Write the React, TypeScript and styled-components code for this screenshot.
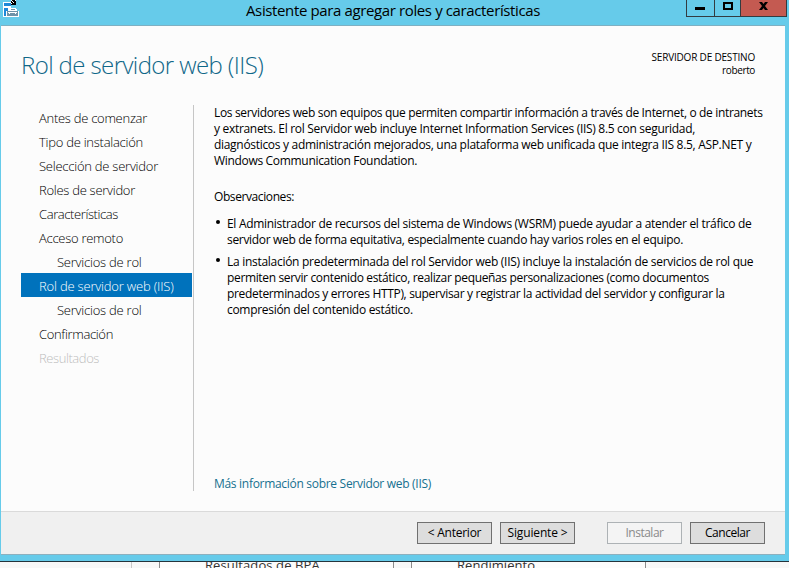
import React from "react";
import styled, { createGlobalStyle } from "styled-components";

const GlobalStyle = createGlobalStyle`
  * { box-sizing: border-box; }
  body {
    margin: 0;
    overflow: hidden;
    background: #f8f8f8;
    font-family: "Open Sans", "Noto Sans", sans-serif;
    font-size: 12px;
    color: #000;
  }
`;

const Screen = styled.div`
  width: 789px;
  height: 568px;
  display: flex;
  flex-direction: column;
  overflow: hidden;
`;

const Window = styled.div`
  height: 562px;
  flex: none;
  display: flex;
  flex-direction: column;
  background: #66cbea;
  border-bottom: 1px solid #25343c;
  padding: 0 4px 6px 1px;
`;

const TitleBar = styled.header`
  height: 25px;
  flex: none;
  display: grid;
  grid-template-columns: 100px 1fr 100px;
`;

const AppIcon = styled.svg`
  display: block;
  margin-left: 2px;
`;

const Title = styled.h1`
  margin: 0;
  text-align: center;
  font-size: 15px;
  font-weight: 400;
  line-height: 21px;
  letter-spacing: -0.375px;
  white-space: nowrap;
`;

const Controls = styled.div`
  display: flex;
  justify-content: flex-end;
  height: 17px;
  margin-right: -2px;
`;

const Control = styled.button<{ $width: number; $close?: boolean }>`
  width: ${(p) => p.$width}px;
  height: 17px;
  padding: 0;
  margin-left: -1px;
  border: 1px solid #333b40;
  border-top: 0;
  background: ${(p) => (p.$close ? "#c45a51" : "#66cbea")};
  svg { display: block; }
`;

const Client = styled.div`
  flex: 1;
  min-height: 0;
  display: flex;
  flex-direction: column;
  background: #fcfcfc;
  border-top: 1px solid #7fb0c2;
  border-bottom: 1px solid #8db0be;
`;

const Heading = styled.div`
  height: 79px;
  flex: none;
  display: flex;
  justify-content: space-between;
  padding: 23px 30px 0 20px;
`;

const PageTitle = styled.h2`
  margin: 0;
  font-size: 24px;
  font-weight: 300;
  line-height: 32px;
  letter-spacing: -0.6px;
  color: #0f6788;
`;

const Destination = styled.div`
  display: flex;
  flex-direction: column;
  align-items: flex-end;
  padding-top: 2px;
  font-size: 10px;
  line-height: 13px;
`;

const Fit = styled.span<{ $tracking: number }>`
  display: block;
  white-space: nowrap;
  letter-spacing: ${(p) => p.$tracking}px;
`;

const Main = styled.div`
  height: 386px;
  flex: none;
  display: flex;
`;

const Nav = styled.nav`
  width: 193px;
  flex: none;
  border-right: 1px solid #c6c6c6;
  padding: 0 1px 0 20px;
`;

const Step = styled.div<{ $nested?: boolean; $state?: "active" | "disabled" }>`
  height: 24px;
  line-height: 27px;
  padding-left: ${(p) => (p.$nested ? 36 : 18)}px;
  font-size: 13px;
  font-weight: 300;
  color: ${(p) => (p.$state === "active" ? "#fff" : p.$state === "disabled" ? "#bdbdbd" : "#000")};
  background: ${(p) => (p.$state === "active" ? "#0072bc" : "transparent")};
`;

const Content = styled.main`
  flex: 1;
  display: flex;
  flex-direction: column;
  padding-left: 20px;
  line-height: 16px;
`;

const Intro = styled.div`
  margin-bottom: 20px;
`;

const Notes = styled.ul`
  list-style: none;
  margin: 11px 0 0;
  padding: 0;
  display: flex;
  flex-direction: column;
  gap: 6px;
`;

const Note = styled.li`
  display: grid;
  grid-template-columns: 13px 1fr;
  &::before {
    content: "";
    width: 4px;
    height: 4px;
    margin: 4px 0 0 2px;
    border-radius: 2px;
    background: #000;
  }
`;

const MoreLink = styled.a`
  margin-top: auto;
  margin-bottom: -1px;
  color: #16708f;
`;

const Footer = styled.footer`
  flex: none;
  height: 43px;
  margin-top: auto;
  display: flex;
  justify-content: flex-end;
  gap: 8px;
  padding: 10px 20px 0 0;
  background: #f0f0f0;
  border-top: 1px solid #dadada;
`;

const Button = styled.button<{ $spaced?: boolean }>`
  width: 75px;
  height: 22px;
  padding: 0;
  margin-left: ${(p) => (p.$spaced ? 24 : 0)}px;
  display: flex;
  align-items: center;
  justify-content: center;
  border: 1px solid #707070;
  background: #dddddd;
  font: 12px/20px "Open Sans", "Noto Sans", sans-serif;
  color: #000;
  &:disabled {
    color: #8a8a8a;
    background: #f4f4f4;
    border-color: #adb2b5;
  }
`;

const Behind = styled.div`
  flex: 1;
  min-height: 0;
  display: grid;
  grid-template-columns: 132px 27px 235px 17px 235px 1fr;
  overflow: hidden;
`;

const Gutter = styled.div`
  border-right: 1px solid #c9c9c9;
`;

const Gap = styled.div``;

const Tile = styled.div`
  border: solid #8c8c8c;
  border-width: 0 1px;
  background: #fcfcfc;
  padding-left: 45px;
  font-size: 13px;
  line-height: 17px;
  color: #333;
  > span { margin-top: -5px; }
`;

const steps: { label: string; tracking: number; nested?: boolean; state?: "active" | "disabled" }[] = [
  { label: "Antes de comenzar", tracking: -0.277 },
  { label: "Tipo de instalación", tracking: -0.258 },
  { label: "Selección de servidor", tracking: -0.244 },
  { label: "Roles de servidor", tracking: -0.277 },
  { label: "Características", tracking: -0.402 },
  { label: "Acceso remoto", tracking: -0.28 },
  { label: "Servicios de rol", tracking: -0.234, nested: true },
  { label: "Rol de servidor web (IIS)", tracking: -0.19, state: "active" },
  { label: "Servicios de rol", tracking: -0.234, nested: true },
  { label: "Confirmación", tracking: -0.338 },
  { label: "Resultados", tracking: -0.419, state: "disabled" },
];

type TextLine = [string, number];

const intro: TextLine[] = [
  ["Los servidores web son equipos que permiten compartir información a través de Internet, o de intranets", -0.341],
  ["y extranets. El rol Servidor web incluye Internet Information Services (IIS) 8.5 con seguridad,", -0.307],
  ["diagnósticos y administración mejorados, una plataforma web unificada que integra IIS 8.5, ASP.NET y", -0.305],
  ["Windows Communication Foundation.", -0.318],
];

const notes: TextLine[][] = [
  [
    ["El Administrador de recursos del sistema de Windows (WSRM) puede ayudar a atender el tráfico de", -0.296],
    ["servidor web de forma equitativa, especialmente cuando hay varios roles en el equipo.", -0.321],
  ],
  [
    ["La instalación predeterminada del rol Servidor web (IIS) incluye la instalación de servicios de rol que", -0.285],
    ["permiten servir contenido estático, realizar pequeñas personalizaciones (como documentos", -0.35],
    ["predeterminados y errores HTTP), supervisar y registrar la actividad del servidor y configurar la", -0.327],
    ["compresión del contenido estático.", -0.3],
  ],
];

const Lines = ({ lines }: { lines: TextLine[] }) => (
  <div>
    {lines.map(([text, tracking]) => (
      <Fit key={text} $tracking={tracking}>{text}</Fit>
    ))}
  </div>
);

export default function App() {
  return (
    <>
      <GlobalStyle />
      <Screen>
        <Window>
          <TitleBar>
            <AppIcon width="17" height="18" viewBox="0 0 17 18" shapeRendering="crispEdges">
              <path d="M0 2h8v15H0z" fill="#fff" />
              <path d="M1 3h7v3H1zM1 8h4v3H3v5H1z" fill="#1e88d8" />
              <path d="M8 0h5v5H8z" fill="#000" />
              <path d="M8 0h1v1H8zM9 1h1v1H9zM10 2h1v1h-1zM8 3h1v1H8zM12 0h1v1h-1z" fill="#fff" />
              <path d="M6 9h1V8h6v1h1v2h2v6H3v-6h3z" fill="#fff" />
              <path d="M8 9h4v1H8zM4 11h11v5H4z" fill="#6e93a8" />
              <path d="M5 12h9v1H5zM6 13h1v1H6zM12 13h1v1h-1z" fill="#fff" />
            </AppIcon>
            <Title>Asistente para agregar roles y características</Title>
            <Controls>
              <Control $width={29} aria-label="Minimizar">
                <svg width="27" height="16"><path d="M8 7h10v3H8z" /></svg>
              </Control>
              <Control $width={27} aria-label="Maximizar">
                <svg width="25" height="16" shapeRendering="crispEdges"><path fillRule="evenodd" d="M8 2h10v8H8zM10 4v4h6V4z" /></svg>
              </Control>
              <Control $width={47} $close aria-label="Cerrar">
                <svg width="45" height="16"><path d="M18 2h3l1.5 2L24 2h3l-3 4 3 4h-3l-1.5-2L21 10h-3l3-4z" /></svg>
              </Control>
            </Controls>
          </TitleBar>
          <Client>
            <Heading>
              <PageTitle>Rol de servidor web (IIS)</PageTitle>
              <Destination>
                <Fit $tracking={-0.189}>SERVIDOR DE DESTINO</Fit>
                <Fit $tracking={-0.358}>roberto</Fit>
              </Destination>
            </Heading>
            <Main>
              <Nav>
                {steps.map((s, i) => (
                  <Step key={i} $nested={s.nested} $state={s.state}>
                    <Fit $tracking={s.tracking}>{s.label}</Fit>
                  </Step>
                ))}
              </Nav>
              <Content>
                <Intro><Lines lines={intro} /></Intro>
                <Fit $tracking={-0.405}>Observaciones:</Fit>
                <Notes>
                  {notes.map((n, i) => (
                    <Note key={i}><Lines lines={n} /></Note>
                  ))}
                </Notes>
                <MoreLink><Fit $tracking={-0.296}>Más información sobre Servidor web (IIS)</Fit></MoreLink>
              </Content>
            </Main>
            <Footer>
              <Button><Fit $tracking={-0.25}>&lt; Anterior</Fit></Button>
              <Button><Fit $tracking={-0.146}>Siguiente &gt;</Fit></Button>
              <Button $spaced disabled><Fit $tracking={-0.497}>Instalar</Fit></Button>
              <Button><Fit $tracking={-0.459}>Cancelar</Fit></Button>
            </Footer>
          </Client>
        </Window>
        <Behind>
          <Gutter />
          <Gap />
          <Tile><Fit $tracking={0.1}>Resultados de BPA</Fit></Tile>
          <Gap />
          <Tile><Fit $tracking={0.05}>Rendimiento</Fit></Tile>
          <Gap />
        </Behind>
      </Screen>
    </>
  );
}
